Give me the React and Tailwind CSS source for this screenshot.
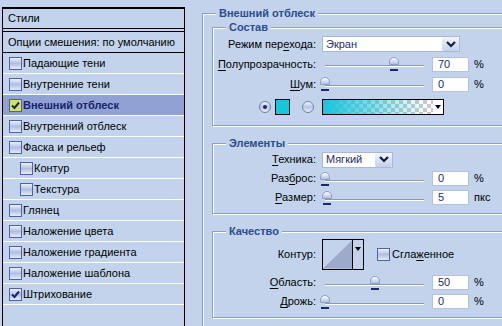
import React from "react";

const EFFECTS = [
  { text: "Падающие тени" },
  { text: "Внутренние тени" },
  { text: "Внешний отблеск", on: true, sel: true },
  { text: "Внутренний отблеск" },
  { text: "Фаска и рельеф" },
  { text: "Контур", sub: true },
  { text: "Текстура", sub: true },
  { text: "Глянец" },
  { text: "Наложение цвета" },
  { text: "Наложение градиента" },
  { text: "Наложение шаблона" },
  { text: "Штрихование", on: true },
];

const Check = ({ on, hot }) => (
  <span
    className={`w-[13px] h-[13px] shrink-0 border border-[#4c62ad] flex items-center justify-center ${
      hot ? "bg-[#d3e35c]" : "bg-linear-to-b from-[#eef1fa] via-[#b1bee2] to-[#e6ebf7]"
    }`}
  >
    {on && (
      <svg width="9" height="9" viewBox="0 0 9 9">
        <path d="M1 4.5 L3.5 7 L8 1.5" stroke="#17236a" strokeWidth="2" fill="none" />
      </svg>
    )}
  </span>
);

const Mn = ({ children }) => <span className="underline underline-offset-2">{children}</span>;

const Frame = ({ title, className, children }) => (
  <div
    className={`relative border border-[#8c9fc4] shadow-[inset_1px_1px_0_#ffffff,1px_1px_0_#ffffff] ${className}`}
  >
    <span className="absolute -top-[8px] left-[13px] px-[3px] bg-[#c2d3eb] leading-[14px] font-bold text-[#2a4e8d]">
      {title}
    </span>
    {children}
  </div>
);

const Label = ({ children }) => (
  <div className="w-[103px] text-right whitespace-nowrap text-black">{children}</div>
);

const Slider = ({ value }) => (
  <div className="relative w-[102px] h-full">
    <div className="absolute left-[3px] right-0 top-[11px] h-[2px] bg-white border-t border-[#8b98b2]" />
    <div
      className="absolute top-[3px] w-[10px] h-[8px] rounded-t-full border border-[#8fa0c8] bg-linear-to-b from-white to-[#b0c0e2]"
      style={{ left: 3 + value * 99 - 5 }}
    />
    <div
      className="absolute top-[15px] w-[8px] h-[2px] bg-[#1b2a6c]"
      style={{ left: 3 + value * 99 - 4 }}
    />
  </div>
);

const Field = ({ value, unit }) => (
  <>
    <div className="ml-[8px] w-[37px] h-[15px] bg-white border border-[#b3c1de] flex items-center pl-[5px] text-[#1d2d6b]">
      {value}
    </div>
    <span className="ml-[5px] text-black">{unit}</span>
  </>
);

const Chevron = () => (
  <svg width="10" height="7" viewBox="0 0 10 7">
    <path d="M1 1 L5 5 L9 1" stroke="#141c3c" strokeWidth="2.2" fill="none" />
  </svg>
);

const Select = ({ value, width }) => (
  <div className={`ml-[6px] h-[16px] bg-white border border-[#a9b8d8] flex items-center ${width}`}>
    <span className="flex-1 pl-[3px] text-[#1d2d6b]">{value}</span>
    <span className="w-[17px] h-full rounded-[2px] bg-linear-to-b from-[#f2f5fb] to-[#c4d0ea] flex items-center justify-center">
      <Chevron />
    </span>
  </div>
);

const Radio = ({ on }) => (
  <span className="w-[12px] h-[12px] rounded-full border border-[#6f80b0] bg-linear-to-b from-[#f4f6fc] via-[#b9c5e6] to-[#eaeef9] flex items-center justify-center">
    {on && <span className="w-[4px] h-[4px] rounded-full bg-[#1b2a6c]" />}
  </span>
);

export default function App() {
  return (
    <div className="w-[502px] h-[326px] overflow-hidden bg-[#c2d3eb] flex font-['Liberation_Sans',Arial,sans-serif] text-[11px] leading-none">
      {/* styles list */}
      <div className="ml-[2px] mt-[7px] w-[183px] shrink-0 border-l border-r border-black flex flex-col">
        <div className="h-[23px] border-t-2 border-b border-black flex items-center pl-[5px] text-black">Стили</div>
        <div className="mt-[2px] h-[23px] border-t border-b border-black flex items-center pl-[5px] text-black">
          Опции смешения: по умолчанию
        </div>
        {EFFECTS.map((e, i) => (
          <div
            key={i}
            className={`h-[22px] border-b border-white flex items-center gap-[1px] ${
              e.sub ? "pl-[17px]" : "pl-[6px]"
            } ${e.sel ? "bg-[#8fa2d3] font-bold text-[#17236a]" : "text-black"}`}
          >
            <Check on={e.on} hot={e.sel} />
            <span>{e.text}</span>
          </div>
        ))}
        <div className="h-[22px]" />
      </div>

      {/* effect options */}
      <div className="flex-1 overflow-hidden">
        <Frame title="Внешний отблеск" className="ml-[17px] mt-[13px] w-[330px] h-[330px]">
          <div className="ml-[9px] mt-[13px] w-[310px] flex flex-col">
            <Frame title="Состав" className="pt-[6px] pb-[10px]">
              <div className="h-[20px] flex items-center">
                <Label>
                  Режим пер<Mn>е</Mn>хода:
                </Label>
                <Select value="Экран" width="w-[138px]" />
              </div>
              <div className="h-[20px] flex items-center">
                <Label>
                  <Mn>П</Mn>олупрозрачность:
                </Label>
                <div className="ml-[6px] h-full">
                  <Slider value={0.7} />
                </div>
                <Field value="70" unit="%" />
              </div>
              <div className="h-[20px] flex items-center">
                <Label>
                  <Mn>Ш</Mn>ум:
                </Label>
                <div className="ml-[6px] h-full">
                  <Slider value={0} />
                </div>
                <Field value="0" unit="%" />
              </div>
              <div className="mt-[5px] h-[16px] flex items-center pl-[46px]">
                <Radio on />
                <span className="ml-[4px] w-[15px] h-[16px] border border-black bg-[#16c6dc]" />
                <span className="ml-[12px]">
                  <Radio />
                </span>
                <div className="ml-[8px] w-[122px] h-[16px] border border-black flex">
                  <span className="flex-1 bg-[linear-gradient(90deg,#18c4dc_0%,rgba(24,196,220,0.55)_45%,rgba(24,196,220,0)_95%),repeating-conic-gradient(#c9c9c9_0_25%,#ffffff_0_50%)] bg-[length:100%_100%,8px_8px]" />
                  <span className="w-[10px] bg-white flex items-center justify-center">
                    <svg width="6" height="4" viewBox="0 0 6 4">
                      <path d="M0 0 H6 L3 4 Z" fill="#000" />
                    </svg>
                  </span>
                </div>
              </div>
            </Frame>

            <Frame title="Элементы" className="mt-[17px] pt-[6px] pb-[6px]">
              <div className="h-[19px] flex items-center">
                <Label>
                  <Mn>Т</Mn>ехника:
                </Label>
                <Select value="Мягкий" width="w-[71px]" />
              </div>
              <div className="h-[19px] flex items-center">
                <Label>
                  Раз<Mn>б</Mn>рос:
                </Label>
                <div className="ml-[6px] h-full">
                  <Slider value={0} />
                </div>
                <Field value="0" unit="%" />
              </div>
              <div className="h-[19px] flex items-center">
                <Label>
                  <Mn>Р</Mn>азмер:
                </Label>
                <div className="ml-[6px] h-full">
                  <Slider value={0.02} />
                </div>
                <Field value="5" unit="пкс" />
              </div>
            </Frame>

            <Frame title="Качество" className="mt-[17px] pt-[7px] pb-[6px]">
              <div className="h-[31px] flex items-center">
                <Label>Контур:</Label>
                <div className="ml-[6px] w-[42px] h-[31px] border border-black flex">
                  <svg width="30" height="29" viewBox="0 0 30 29" className="border-r border-black">
                    <path d="M0 29 L30 0 L30 29 Z" fill="#9eaacb" />
                  </svg>
                  <span className="flex-1 flex justify-center pt-[7px]">
                    <svg width="6" height="4" viewBox="0 0 6 4">
                      <path d="M0 0 H6 L3 4 Z" fill="#000" />
                    </svg>
                  </span>
                </div>
                <span className="ml-[13px]">
                  <Check />
                </span>
                <span className="ml-[2px] text-black">
                  Сгла<Mn>ж</Mn>енное
                </span>
              </div>
              <div className="mt-[3px] h-[19px] flex items-center">
                <Label>
                  <Mn>О</Mn>бласть:
                </Label>
                <div className="ml-[6px] h-full">
                  <Slider value={0.5} />
                </div>
                <Field value="50" unit="%" />
              </div>
              <div className="h-[19px] flex items-center">
                <Label>
                  <Mn>Д</Mn>рожь:
                </Label>
                <div className="ml-[6px] h-full">
                  <Slider value={0} />
                </div>
                <Field value="0" unit="%" />
              </div>
            </Frame>
          </div>
        </Frame>
      </div>
    </div>
  );
}
